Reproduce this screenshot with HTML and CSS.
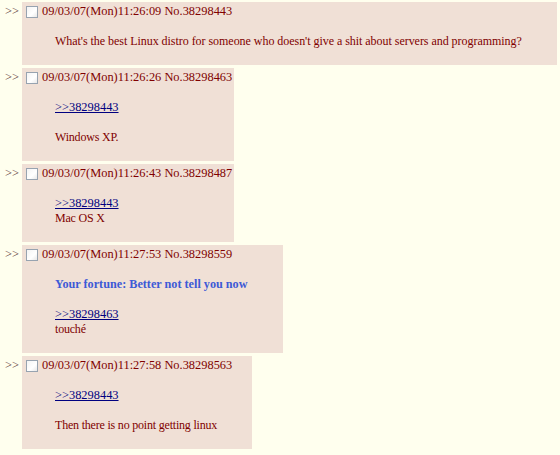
FILE: index.html
```html
<!DOCTYPE html>
<html lang="en">
<head>
    <meta charset="UTF-8" />
    <title>Thread</title>
    <link rel="stylesheet" href="styles.css">
</head>
<body>
    <div class="thread">
        <div class="post">
            <div class="doubledash">&gt;&gt;</div>
            <div class="reply">
                <div class="postinfo"><input type="checkbox" class="delete"><span>09/03/07(Mon)11:26:09 No.38298443</span></div>
                <blockquote class="op">What's the best Linux distro for someone who doesn't give a shit about servers and programming?</blockquote>
            </div>
        </div>

        <div class="post">
            <div class="doubledash">&gt;&gt;</div>
            <div class="reply">
                <div class="postinfo"><input type="checkbox" class="delete"><span>09/03/07(Mon)11:26:26 No.38298463</span></div>
                <blockquote><a href="#" class="quotelink">&gt;&gt;38298443</a><br><br>Windows XP.</blockquote>
            </div>
        </div>

        <div class="post">
            <div class="doubledash">&gt;&gt;</div>
            <div class="reply">
                <div class="postinfo"><input type="checkbox" class="delete"><span>09/03/07(Mon)11:26:43 No.38298487</span></div>
                <blockquote><a href="#" class="quotelink">&gt;&gt;38298443</a><br>Mac OS X</blockquote>
            </div>
        </div>

        <div class="post">
            <div class="doubledash">&gt;&gt;</div>
            <div class="reply">
                <div class="postinfo"><input type="checkbox" class="delete"><span>09/03/07(Mon)11:27:53 No.38298559</span></div>
                <blockquote><b class="fortune">Your fortune: Better not tell you now</b><br><br><a href="#" class="quotelink">&gt;&gt;38298463</a><br>touché</blockquote>
            </div>
        </div>

        <div class="post">
            <div class="doubledash">&gt;&gt;</div>
            <div class="reply">
                <div class="postinfo"><input type="checkbox" class="delete"><span>09/03/07(Mon)11:27:58 No.38298563</span></div>
                <blockquote><a href="#" class="quotelink">&gt;&gt;38298443</a><br><br>Then there is no point getting linux</blockquote>
            </div>
        </div>
    </div>
</body>
</html>
```

FILE: styles.css
```css
body {
    margin: 0;
    background: #ffffee;
    color: #800000;
    font-family: "Liberation Serif", "Times New Roman", serif;
    font-size: 12.4px;
    line-height: 15px;
}
.thread {
    display: flex;
    flex-direction: column;
    align-items: flex-start;
    gap: 3px;
    padding-top: 2px;
}
.post {
    display: flex;
    align-items: flex-start;
}
.doubledash {
    width: 19px;
    padding-right: 3px;
    padding-top: 2px;
    text-align: right;
    color: #5a3030;
    box-sizing: content-box;
}
.reply {
    background: #f0e0d6;
    padding: 2px 2px 2px 0;
}
.postinfo {
    display: flex;
    align-items: center;
    height: 15px;
    white-space: nowrap;
}
.delete {
    appearance: none;
    -webkit-appearance: none;
    width: 12px;
    height: 12px;
    margin: 0 4px 0 4px;
    border: 1px solid #97a3b0;
    background: linear-gradient(135deg, #f4f4f4 0%, #ffffff 60%, #e8e8e8 100%);
    box-sizing: border-box;
}
blockquote {
    margin: 15px 33px 14px 33px;
    font-size: 12px;
    letter-spacing: -0.2px;
    white-space: nowrap;
}
blockquote.op {
    letter-spacing: -0.04px;
}
.quotelink {
    color: #000080;
    text-decoration: underline;
    font-size: 12.4px;
    letter-spacing: 0;
    vertical-align: top;
}
.fortune {
    color: #3d5ad6;
    font-size: 12.2px;
    letter-spacing: 0;
    vertical-align: top;
}
```
